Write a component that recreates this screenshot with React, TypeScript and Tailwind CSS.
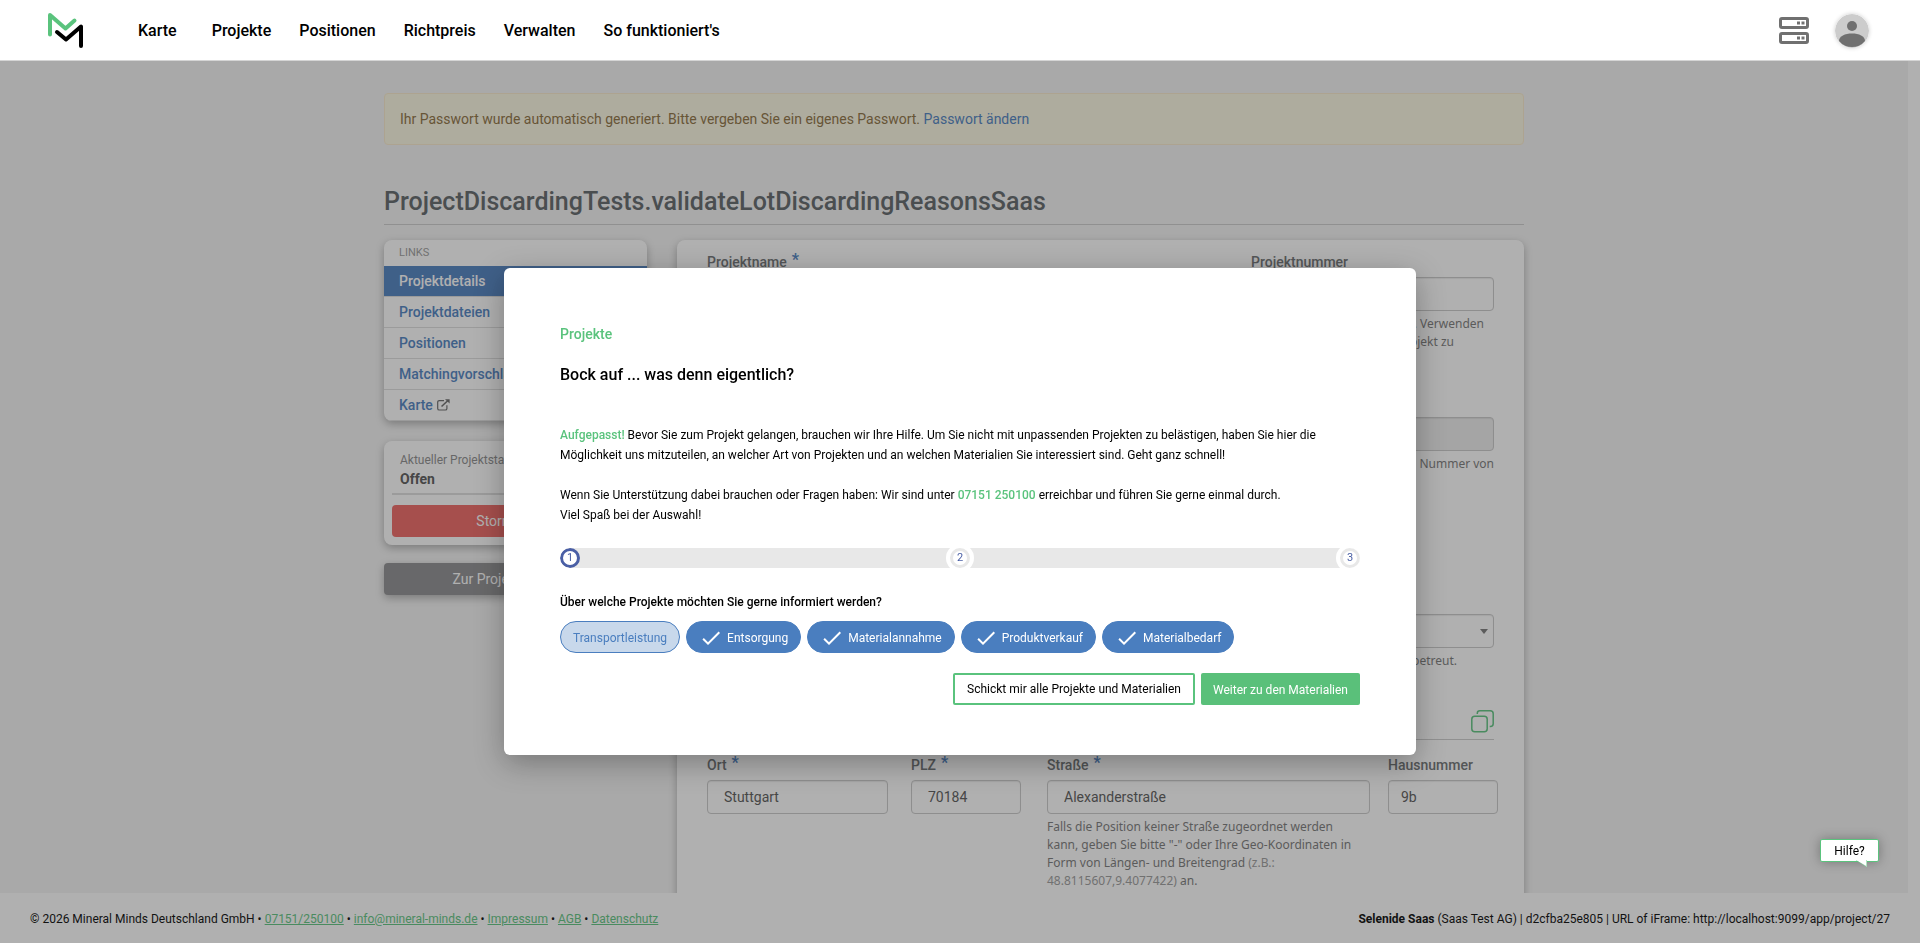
import { useState, type ReactNode } from "react";
import { clsx } from "clsx";

const navItems = [
  { href: "#projekte", label: "Projekte" },
  { href: "#positionen", label: "Positionen" },
  { href: "#richtpreis", label: "Richtpreis" },
  { href: "#verwalten", label: "Verwalten" },
  { href: "#hilfe", label: "So funktioniert's" }
];

const sideLinks = [
  { label: "Projektdetails", active: true },
  { label: "Projektdateien" },
  { label: "Positionen" },
  { label: "Matchingvorschläge" },
  { label: "Karte", external: true }
];

const projectTypes = ["Transportleistung", "Entsorgung", "Materialannahme", "Produktverkauf", "Materialbedarf"];

const inputClass =
  "block h-[34px] w-full rounded-[4px] border border-[#c8c8c8] bg-white text-[14px] text-[#555] shadow-[inset_0_1px_1px_rgba(0,0,0,0.08)] disabled:bg-[#eee]";

function Logo() {
  return (
    <svg width="36" height="36" viewBox="0 0 36 36" fill="none" strokeLinecap="round" strokeLinejoin="round">
      <path d="M2 21.500V2L17.500 15.500L26.500 7.500" stroke="#5ac37d" strokeWidth="4" />
      <path d="M9 19L18 26.500L33 13.500V33" stroke="#000" strokeWidth="4" />
    </svg>
  );
}

function ServerIcon() {
  return (
    <svg width="30" height="28" viewBox="0 0 30 28" fill="none">
      <rect x="1.500" y="1.500" width="27" height="9" rx="1.500" stroke="#707070" strokeWidth="3" />
      <rect x="1.500" y="16.500" width="27" height="9" rx="1.500" stroke="#707070" strokeWidth="3" />
      <path d="M18 4.500h3v3h-3zM22.500 4.500h3v3h-3zM18 19.500h3v3h-3zM22.500 19.500h3v3h-3z" fill="#707070" />
    </svg>
  );
}

function Avatar() {
  return (
    <svg width="34" height="34" viewBox="0 0 34 34" className="rounded-full shadow-[0_0_4px_rgba(0,0,0,0.2)]">
      <circle cx="17" cy="17" r="17" fill="#ccc" />
      <circle cx="17" cy="12" r="5" fill="#707070" />
      <path d="M4 27C4 22 10 19.500 17 19.500S30 22 30 27A17 17 0 0 1 4 27Z" fill="#707070" />
    </svg>
  );
}

function CheckIcon() {
  return (
    <svg width="24" height="24" viewBox="0 0 24 24" fill="currentColor">
      <path d="M9 16.170 4.830 12l-1.420 1.410L9 19 21 7l-1.410-1.410z" />
    </svg>
  );
}

function ExternalIcon() {
  return (
    <svg width="13" height="12" viewBox="0 0 13 12" fill="none" stroke="#666" strokeWidth="1.200">
      <path d="M7 1.600H2.300C1.300 1.600 .7 2.200 .7 3.200v6.200c0 1 .6 1.600 1.600 1.600h6c1 0 1.600-.6 1.600-1.600V6.200" />
      <path d="M4.500 7.500L11 1.500" strokeWidth="1.600" />
      <path d="M8 .2h4.600v4.400z" fill="#666" stroke="none" />
    </svg>
  );
}

function CopyIcon() {
  return (
    <svg width="23" height="23" viewBox="0 0 23 23" fill="none" stroke="#5ac37d" strokeWidth="1.500">
      <rect x=".8" y="6.300" width="15.400" height="15.400" rx="3" />
      <path d="M6.300 4V3.300C6.300 1.800 7.300 .8 8.800 .8h10.400c1.700 0 3 1.300 3 3v10c0 1.600-1.200 2.700-2.700 2.700h-.8" />
    </svg>
  );
}

function Header() {
  return (
    <header className="relative z-20 flex h-[61px] shrink-0 items-center justify-between border-b border-[#d5d5d5] bg-white pt-[2px] pr-[51px] pl-12">
      <div className="flex items-center">
        <a href="#start" aria-label="Startseite">
          <Logo />
        </a>
        <nav className="ml-[54px] flex items-center gap-7 text-[16px] font-medium text-black">
          <a href="#karte" className="mr-[7px]">
            Karte
          </a>
          {navItems.map((item) => (
            <a key={item.href} href={item.href}>
              {item.label}
            </a>
          ))}
        </nav>
      </div>
      <div className="flex items-center gap-[26px]">
        <button type="button" aria-label="Server">
          <ServerIcon />
        </button>
        <button type="button" aria-label="Benutzerkonto">
          <Avatar />
        </button>
      </div>
    </header>
  );
}

function Sidebar() {
  return (
    <aside className="w-[263px] shrink-0">
      <nav className="overflow-hidden rounded-[8px] bg-white shadow-[0_3px_8px_rgba(0,0,0,0.3)]">
        <div className="px-[15px] text-[11px] leading-[26px] text-[#999]">LINKS</div>
        {sideLinks.map((link) => (
          <a
            key={link.label}
            href="#details"
            className={clsx(
              "flex h-[31px] items-center gap-1 border-b border-[#ddd] px-[15px] text-[14px] font-medium",
              link.active ? "bg-[#4a7ebf] text-white" : "text-[#4a7ebf]"
            )}
          >
            {link.label}
            {link.external && <ExternalIcon />}
          </a>
        ))}
      </nav>
      <div className="mt-5 rounded-[8px] bg-white p-2 shadow-[0_3px_8px_rgba(0,0,0,0.3)]">
        <div className="border-b-2 border-[#ddd] px-2 pt-[2px] pb-1 text-[#555]">
          <p className="text-[12px] leading-[18px] text-[#8a8a8a]">Aktueller Projektstatus</p>
          <p className="text-[14px] leading-[20px] font-bold">Offen</p>
        </div>
        <button type="button" className="mt-[10px] h-8 w-full rounded-[4px] bg-[#ef6360] text-[14px] text-white">
          Stornieren ...
        </button>
      </div>
      <button
        type="button"
        className="mt-[18px] h-8 w-full rounded-[4px] bg-[#8c8c8e] text-[14px] text-white shadow-[0_3px_8px_rgba(0,0,0,0.3)]"
      >
        Zur Projektübersicht
      </button>
    </aside>
  );
}

function FieldLabel({ id, required, children }: { id: string; required?: boolean; children: ReactNode }) {
  return (
    <label htmlFor={id} className="flex h-[27px] gap-[5px] text-[14px] leading-6 font-medium text-[#6a6e70]">
      {children}
      {required && <span className="text-[16px] leading-5 font-bold text-[#4a7ebf]">*</span>}
    </label>
  );
}

function Help({ children }: { children: ReactNode }) {
  return <p className="mt-1 font-['Noto_Sans','Open_Sans',sans-serif] text-[12px] leading-[18px] text-[#777]">{children}</p>;
}

function ProjectForm() {
  return (
    <form className="min-w-0 flex-1 rounded-[8px] bg-white pt-[10px] pr-[26px] pb-10 pl-[30px] shadow-[0_3px_8px_rgba(0,0,0,0.3)]">
      <div className="mr-1 flex gap-[30px]">
        <div className="flex-1">
          <FieldLabel id="name" required>
            Projektname
          </FieldLabel>
          <input id="name" className={clsx(inputClass, "px-4")} />
        </div>
        <div className="h-[140px] w-[243px]">
          <FieldLabel id="number">Projektnummer</FieldLabel>
          <input id="number" className={clsx(inputClass, "px-4")} />
          <div className="text-right">
            <Help>
              <span className="mr-[10px]">Ihre interne Nummer. Verwenden</span>
              <br />
              <span className="mr-10">Sie diese, um das Projekt zu</span>
            </Help>
          </div>
        </div>
      </div>
      <div className="mr-1 h-[197px] text-right">
        <div className="text-left">
          <FieldLabel id="external">Externe Nummer</FieldLabel>
        </div>
        <input id="external" disabled className={clsx(inputClass, "px-4")} />
        <Help>Nummer von</Help>
      </div>
      <div className="mr-1 h-[97px]">
        <FieldLabel id="owner">Ansprechpartner</FieldLabel>
        <div className="relative">
          <select id="owner" className={clsx(inputClass, "appearance-none px-4")} />
          <svg width="8" height="5" viewBox="0 0 8 5" className="pointer-events-none absolute top-[15px] right-[6px]">
            <path d="M0 0h8L4 5z" fill="#777" />
          </svg>
        </div>
        <div className="pr-[37px] text-right">
          <Help>Wer das Projekt betreut.</Help>
        </div>
      </div>
      <div className="mr-1 flex h-[56px] items-end justify-end border-b border-[#ccc] pb-[6px]">
        <button type="button" aria-label="Adresse kopieren">
          <CopyIcon />
        </button>
      </div>
      <div className="mt-[13px] flex">
        <div className="mr-[23px] flex-1">
          <FieldLabel id="city" required>
            Ort
          </FieldLabel>
          <input id="city" defaultValue="Stuttgart" className={clsx(inputClass, "px-4")} />
        </div>
        <div className="mr-[26px] w-[110px]">
          <FieldLabel id="zip" required>
            PLZ
          </FieldLabel>
          <input id="zip" defaultValue="70184" className={clsx(inputClass, "px-4")} />
        </div>
        <div className="mr-[18px] w-[323px]">
          <FieldLabel id="street" required>
            Straße
          </FieldLabel>
          <input id="street" defaultValue="Alexanderstraße" className={clsx(inputClass, "px-4")} />
          <div className="pr-3">
            <Help>
              Falls die Position keiner Straße zugeordnet werden kann, geben Sie bitte "-" oder Ihre Geo-Koordinaten in Form von
              Längen- und Breitengrad <span className="text-[#999]">(z.B.: 48.8115607,9.4077422)</span> an.
            </Help>
          </div>
        </div>
        <div className="w-[110px]">
          <FieldLabel id="house">Hausnummer</FieldLabel>
          <input id="house" defaultValue="9b" className={clsx(inputClass, "px-3")} />
        </div>
      </div>
    </form>
  );
}

function Steps() {
  return (
    <ol className="mt-[23px] flex h-5 justify-between overflow-hidden rounded-full bg-[#e8e8e8] text-[11px] text-[#4a5fa5]">
      {[1, 2, 3].map((step) => (
        <li
          key={step}
          className={clsx(
            "flex size-5 items-center justify-center rounded-full border-[3px] bg-white",
            step === 1 ? "border-[#4a5fa5]" : "border-[#e8e8e8] ring-4 ring-white"
          )}
        >
          {step}
        </li>
      ))}
    </ol>
  );
}

function PreferencesModal() {
  const [selected, setSelected] = useState(projectTypes.slice(1));

  function toggle(type: string) {
    setSelected((prev) => (prev.includes(type) ? prev.filter((t) => t !== type) : [...prev, type]));
  }

  return (
    <div className="fixed inset-0 z-10 flex items-start justify-center bg-[#303030]/38 pt-[268px]">
      <div
        role="dialog"
        aria-modal="true"
        aria-labelledby="modal-title"
        className="w-full max-w-[912px] rounded-[6px] bg-white px-14 pt-14 pb-[50px] text-[12px] leading-5 text-black shadow-[0_8px_30px_rgba(0,0,0,0.3)]"
      >
        <p className="text-[14px] font-medium text-[#5ac37d]">Projekte</p>
        <h2 id="modal-title" className="mt-[19px] text-[16px] leading-6 font-medium">
          Bock auf ... was denn eigentlich?
        </h2>
        <p className="mt-[38px]">
          <span className="font-medium text-[#5ac37d]">Aufgepasst!</span> Bevor Sie zum Projekt gelangen, brauchen wir Ihre Hilfe.
          Um Sie nicht mit unpassenden Projekten zu belästigen, haben Sie hier die Möglichkeit uns mitzuteilen, an welcher Art
          von Projekten und an welchen Materialien Sie interessiert sind. Geht ganz schnell!
        </p>
        <p className="mt-5">
          Wenn Sie Unterstützung dabei brauchen oder Fragen haben: Wir sind unter{" "}
          <a href="tel:07151250100" className="font-medium text-[#5ac37d]">
            07151 250100
          </a>{" "}
          erreichbar und führen Sie gerne einmal durch.
          <br />
          Viel Spaß bei der Auswahl!
        </p>
        <Steps />
        <h3 className="mt-6 font-medium">Über welche Projekte möchten Sie gerne informiert werden?</h3>
        <div className="mt-[9px] flex gap-[6px]">
          {projectTypes.map((type) => {
            const active = selected.includes(type);
            return (
              <button
                key={type}
                type="button"
                aria-pressed={active}
                onClick={() => toggle(type)}
                className={clsx(
                  "flex h-8 items-center gap-1 rounded-full border border-[#4a7ebf] px-3 pt-[2px]",
                  active ? "bg-[#4a7ebf] text-white" : "bg-[#c8d8eb] text-[#4a7ebf]"
                )}
              >
                {active && <CheckIcon />}
                {type}
              </button>
            );
          })}
        </div>
        <div className="mt-5 flex justify-end gap-[6px]">
          <button type="button" className="h-8 rounded-[2px] border-2 border-[#5ac37d] px-3">
            Schickt mir alle Projekte und Materialien
          </button>
          <button type="button" className="h-8 rounded-[2px] bg-[#5ac07a] px-3 pt-[2px] text-white">
            Weiter zu den Materialien
          </button>
        </div>
      </div>
    </div>
  );
}

function Footer() {
  const linkClass = "text-[#5ac37d] underline";
  return (
    <footer className="flex h-[50px] shrink-0 items-center justify-between bg-white px-[30px] pt-[2px] text-[12px] text-black">
      <p>
        © 2026 Mineral Minds Deutschland GmbH •{" "}
        <a href="tel:07151250100" className={linkClass}>
          07151/250100
        </a>{" "}
        •{" "}
        <a href="mailto:info@mineral-minds.de" className={linkClass}>
          info@mineral-minds.de
        </a>{" "}
        •{" "}
        <a href="#impressum" className={linkClass}>
          Impressum
        </a>{" "}
        •{" "}
        <a href="#agb" className={linkClass}>
          AGB
        </a>{" "}
        •{" "}
        <a href="#datenschutz" className={linkClass}>
          Datenschutz
        </a>
      </p>
      <p>
        <span className="font-bold">Selenide Saas</span> (Saas Test AG) | d2cfba25e805 | URL of iFrame:
        http://localhost:9099/app/project/27
      </p>
    </footer>
  );
}

function HelpBubble() {
  return (
    <button
      type="button"
      className="fixed right-[41px] bottom-[81px] z-20 h-[23px] w-[59px] rounded-[2px] border border-[#5ac37d] bg-white text-[12px] text-black shadow-[0_0_12px_rgba(0,0,0,0.3)]"
    >
      Hilfe?
      <svg width="12" height="7" viewBox="0 0 12 7" className="absolute top-full right-[10px] -mt-px">
        <path d="M0 0h11v7z" fill="#fff" />
        <path d="M0 .5L10.500 6.500V0" fill="none" stroke="#5ac37d" strokeOpacity=".6" strokeWidth=".8" />
      </svg>
    </button>
  );
}

export default function App() {
  return (
    <div className="flex h-screen flex-col overflow-hidden font-[Roboto,sans-serif]">
      <Header />
      <div className="flex min-h-0 flex-1 overflow-hidden bg-white">
        <main className="min-w-0 flex-1 overflow-hidden bg-[#f4f4f4] pt-8">
          <div className="mx-auto max-w-[1140px]">
            <div className="rounded-[4px] border border-[#faebcc] bg-[#fcf8e3] p-[15px] text-[14px] leading-5 text-[#8a6d3b]">
              Ihr Passwort wurde automatisch generiert. Bitte vergeben Sie ein eigenes Passwort.{" "}
              <a href="#passwort" className="text-[#4a7ebf]">
                Passwort ändern
              </a>
            </div>
            <h1 className="mt-[41px] border-b border-[#ccc] pb-[6px] text-[25px] leading-8 font-medium text-[#5b6165]">
              ProjectDiscardingTests.validateLotDiscardingReasonsSaas
            </h1>
            <div className="mt-[15px] flex items-start gap-[30px]">
              <Sidebar />
              <ProjectForm />
            </div>
          </div>
        </main>
        <div className="w-3 shrink-0" />
      </div>
      <Footer />
      <PreferencesModal />
      <HelpBubble />
    </div>
  );
}
